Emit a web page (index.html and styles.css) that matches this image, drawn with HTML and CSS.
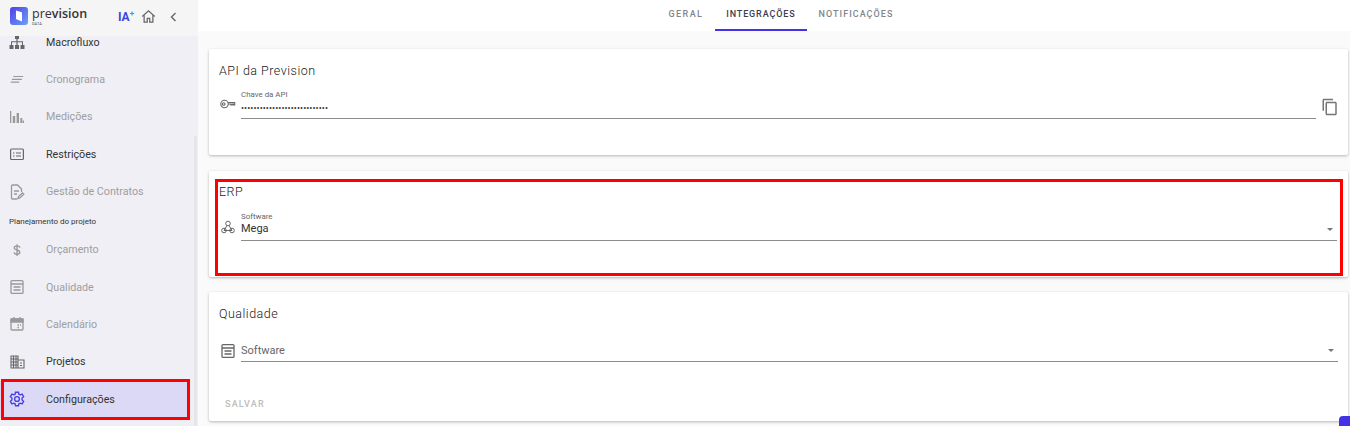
FILE: index.html
```html
<!DOCTYPE html>
<html>
<head>
    <meta charset="UTF-8">
    <title>Prevision - Configurações</title>
    <link rel="stylesheet" href="styles.css">
</head>
<body>
    <div class="sidebar">
        <div class="brand">
            <svg class="brand-logo" width="18" height="18" viewBox="0 0 18 18">
                <defs>
                    <linearGradient id="logo-grad" x1="0" y1="0" x2="1" y2="1">
                        <stop offset="0" stop-color="#4b3fe8"/>
                        <stop offset="1" stop-color="#6fa0f5"/>
                    </linearGradient>
                </defs>
                <path d="M3 0h12a3 3 0 0 1 3 3v12a3 3 0 0 1-3 3H3a3 3 0 0 1-3-3V3a3 3 0 0 1 3-3z" fill="url(#logo-grad)"/>
                <path d="M6 3.500l5 1.500a1 1 0 0 1 1 1v8.500l-5-2a1 1 0 0 1-1-1z" fill="#fff"/>
            </svg>
            <div class="brand-name">
                <span class="brand-word">pre<b>vision</b></span>
                <span class="brand-sub">DATA</span>
            </div>
            <span class="brand-ia">IA<sup>+</sup></span>
            <svg class="brand-btn" width="15" height="15" viewBox="0 0 24 24" fill="none" stroke="#666" stroke-width="2">
                <path d="M2 12l10-9 10 9"/><path d="M5 10v11h5v-6h4v6h5V10"/>
            </svg>
            <svg class="brand-back" width="12" height="12" viewBox="0 0 24 24" fill="none" stroke="#666" stroke-width="2.800">
                <path d="M15 4l-8 8 8 8"/>
            </svg>
        </div>
        <div class="menu">
            <a class="menu-item">
                <svg width="18" height="18" viewBox="0 0 18 18" fill="#666"><path d="M7 2h4v4H9.600v2.300H15V12h1.500v4h-4v-4H14V9.300H9.600V12H11v4H7v-4h1.400V9.300H4V12h1.500v4h-4v-4H3V8.300h5.400V6H7z"/></svg>
                <span>Macrofluxo</span>
            </a>
            <a class="menu-item off">
                <svg width="18" height="18" viewBox="0 0 18 18" fill="#999"><path d="M5.500 6h10l-.5 1.100H5zM4.200 8.800h10l-.5 1.100h-10zM3 11.600h8.500l-.5 1.100H2.500z"/></svg>
                <span>Cronograma</span>
            </a>
            <a class="menu-item off">
                <svg width="18" height="18" viewBox="0 0 18 18" fill="#999"><path d="M2 3h1.300v12H2zM4.800 8h2.400v7H4.800zM8.600 5H11v10H8.600zM12.300 10h2v5h-2zM14.800 12.500H16V15h-1.200z"/></svg>
                <span>Medições</span>
            </a>
            <a class="menu-item">
                <svg width="18" height="18" viewBox="0 0 18 18" fill="none" stroke="#666" stroke-width="1.200"><rect x="2.600" y="4" width="12.800" height="10.500" rx="1"/><path d="M5 8h1.500M8 8h5M5 11h1.500M8 11h5"/></svg>
                <span>Restrições</span>
            </a>
            <a class="menu-item off">
                <svg width="18" height="18" viewBox="0 0 18 18" fill="none" stroke="#999" stroke-width="1.300"><path d="M9 16H4.500a1 1 0 0 1-1-1V3a1 1 0 0 1 1-1h5l4 4v3"/><path d="M6 8h5M6 11h3M10 15.500l.5-2 4-3.500 1.300 1.300-4 3.700z"/></svg>
                <span>Gestão de Contratos</span>
            </a>
            <div class="menu-label">Planejamento do projeto</div>
            <a class="menu-item off">
                <svg width="18" height="18" viewBox="0 0 18 18" fill="none" stroke="#999" stroke-width="1.300"><path d="M11.800 6.800c0-1.200-1.200-2-2.800-2s-2.800.8-2.800 2S7.400 8.600 9 9s2.800 1 2.800 2.300-1.200 2-2.800 2-2.800-.8-2.800-2M9 3.300v11.600"/></svg>
                <span>Orçamento</span>
            </a>
            <a class="menu-item off">
                <svg width="18" height="18" viewBox="0 0 18 18" fill="none" stroke="#999" stroke-width="1.300"><rect x="3" y="2.600" width="12" height="12.800" rx="1"/><path d="M3 6h12M5.500 9h7M5.500 12h7"/></svg>
                <span>Qualidade</span>
            </a>
            <a class="menu-item off">
                <svg width="18" height="18" viewBox="0 0 18 18" fill="none" stroke="#999" stroke-width="1.300"><rect x="3" y="4" width="12" height="11" rx="1"/><path d="M3 4h12v3H3z" fill="#999"/><path d="M6 2v3M12 2v3M9.500 10h1.500M12 10h1M9.500 12.500h1.500"/></svg>
                <span>Calendário</span>
            </a>
            <a class="menu-item">
                <svg width="18" height="18" viewBox="0 0 18 18" fill="none" stroke="#666" stroke-width="1.100"><path d="M3 3h7v12H3zM10 7h6v8h-6zM3 6h7M3 9h7M3 12h7M5.500 3v12M8 3v12M12 10h2M12 12.500h2"/></svg>
                <span>Projetos</span>
            </a>
            <a class="menu-item active">
                <svg width="18" height="18" viewBox="0 0 24 24" fill="none" stroke="#4a3de8" stroke-width="1.800"><path d="M10 3h4l.5 2.600 1.800.9 2.500-1 2 3.400-2 1.700v2.800l2 1.700-2 3.400-2.500-1-1.800.9L14 21h-4l-.5-2.600-1.800-.9-2.500 1-2-3.400 2-1.700v-2.800l-2-1.700 2-3.400 2.500 1 1.800-.9z"/><circle cx="12" cy="12" r="3.200"/></svg>
                <span>Configurações</span>
            </a>
        </div>
        <div class="sidebar-scroll"></div>
    </div>

    <div class="content">
        <div class="tabs">
            <a class="tab tab-first">Geral</a>
            <a class="tab current">Integrações</a>
            <a class="tab">Notificações</a>
        </div>
        <div class="cards">
            <div class="card card-api">
                <h3>API da Prevision</h3>
                <div class="field-row">
                    <svg class="field-icon" width="18" height="18" viewBox="0 0 18 18" fill="none" stroke="#666" stroke-width="1.100"><circle cx="5.500" cy="9" r="3.700"/><circle cx="4.700" cy="9" r="1.300"/><path d="M9.200 7.500h6.500v2.400h-1.300V9h-1.200v.9h-1.400V9h-2.600"/></svg>
                    <div class="field">
                        <label>Chave da API</label>
                        <div class="value secret">••••••••••••••••••••••••••••</div>
                    </div>
                    <svg class="copy-icon" width="18" height="18" viewBox="0 0 24 24" fill="#757575"><path d="M16 1H4c-1.100 0-2 .9-2 2v14h2V3h12V1zm3 4H8c-1.100 0-2 .9-2 2v14c0 1.100.9 2 2 2h11c1.100 0 2-.9 2-2V7c0-1.100-.9-2-2-2zm0 16H8V7h11v14z"/></svg>
                </div>
            </div>
            <div class="card card-erp">
                <h3>ERP</h3>
                <div class="field-row">
                    <svg class="field-icon" width="18" height="18" viewBox="0 0 18 18" fill="none" stroke="#666" stroke-width="1"><circle cx="9" cy="5.500" r="2.300"/><circle cx="5" cy="12.500" r="2.300"/><circle cx="13" cy="12.500" r="2.300"/><path d="M7.900 7.500L5 12.500M10 7.500l3 5M5 12.500h8"/></svg>
                    <div class="field">
                        <label>Software</label>
                        <div class="value">Mega</div>
                        <span class="caret"></span>
                    </div>
                </div>
            </div>
            <div class="card card-quality">
                <h3>Qualidade</h3>
                <div class="field-row">
                    <svg class="field-icon" width="18" height="18" viewBox="0 0 18 18" fill="none" stroke="#666" stroke-width="1.300"><rect x="3" y="2.600" width="12" height="12.800" rx="1"/><path d="M3 6h12M5.500 9h7M5.500 12h7"/></svg>
                    <div class="field field-empty">
                        <div class="placeholder">Software</div>
                        <span class="caret"></span>
                    </div>
                </div>
                <a class="save-btn">Salvar</a>
            </div>
        </div>
    </div>

    <div class="mark mark-menu"></div>
    <div class="mark mark-erp"></div>
    <div class="chat-tab"></div>
</body>
</html>
```

FILE: styles.css
```css
html, body {
    margin: 0;
    padding: 0;
    width: 100%;
    height: 100%;
    overflow: hidden;
}
body {
    display: flex;
    background-color: #fafafa;
    color: #333;
    font-family: Roboto, "Liberation Sans", sans-serif;
}

/* sidebar */
.sidebar {
    position: relative;
    width: 198px;
    flex-shrink: 0;
    background-color: #f0eff6;
    overflow: hidden;
}
.brand {
    position: relative;
    z-index: 2;
    display: flex;
    align-items: center;
    height: 36px;
    padding: 0 0 3px 10px;
    box-sizing: border-box;
    background-color: #f5f5f5;
}
.brand-logo { margin-top: -1px; }
.brand-name {
    display: flex;
    flex-direction: column;
    margin-left: 4px;
    width: 83px;
}
.brand-word {
    font-family: "Open Sans", sans-serif;
    font-size: 12.500px;
    line-height: 14px;
    color: #333;
}
.brand-word b { font-weight: 600; }
.brand-sub {
    font-size: 4px;
    line-height: 5px;
    color: #555;
}
.brand-ia {
    width: 20px;
    margin-left: 3px;
    font-size: 12px;
    font-weight: 700;
    color: #3b49df;
}
.brand-ia sup {
    font-size: 8px;
    line-height: 0;
    color: #4a90d9;
}
.brand-btn { margin-left: 3px; }
.brand-back { margin-left: 12px; }

.menu {
    margin-top: -12.700px;
    width: 187px;
}
.menu-item {
    display: flex;
    align-items: center;
    height: 37.400px;
    padding-left: 8px;
    box-sizing: border-box;
    font-size: 10.700px;
    color: #333;
}
.menu-item svg { flex-shrink: 0; }
.menu-item span { margin-left: 20px; }
.menu-item.off { color: #9e9e9e; }
.menu-item.active { background-color: #dbd9f5; }
.menu-label {
    height: 17px;
    line-height: 17px;
    margin-top: 3.200px;
    padding-left: 9px;
    padding-bottom: 0.500px;
    font-size: 8px;
    color: #333;
}
.sidebar-scroll {
    position: absolute;
    left: 194px;
    top: 136px;
    bottom: 0;
    width: 3px;
    background-color: #e6e6e9;
}

/* tabs */
.content {
    flex-grow: 1;
    min-width: 0;
}
.tabs {
    display: flex;
    justify-content: center;
    height: 31px;
    background-color: #fff;
    padding-left: 14px;
    box-sizing: border-box;
}
.tab {
    padding: 0 11px;
    line-height: 28px;
    font-size: 9px;
    font-weight: 500;
    letter-spacing: 1.050px;
    text-transform: uppercase;
    color: #85858c;
}
.tab + .tab { margin-left: 1px; }
.tab-first { letter-spacing: 1.400px; }
.tab.current {
    color: #3c3a55;
    letter-spacing: 0.870px;
    border-bottom: 2px solid #4433e6;
    height: 29px;
}

/* cards */
.cards {
    display: flex;
    flex-direction: column;
    gap: 16px;
    padding: 18px 2px 0 11px;
}
.card {
    background-color: #fff;
    border-radius: 2px;
    box-shadow: 0 1px 3px rgba(0, 0, 0, 0.28);
    padding: 14px 10px 0;
    box-sizing: border-box;
}
.card-api, .card-erp { height: 106px; }
.card-quality { height: 129px; }
.card-erp { margin-bottom: -1px; padding-top: 13px; }
.card h3 {
    margin: 0;
    font-size: 12.500px;
    line-height: 15px;
    font-weight: 300;
    letter-spacing: 0.500px;
    color: #222;
}
.field-row {
    display: flex;
    align-items: flex-start;
}
.field-icon { flex-shrink: 0; margin-top: 10px; }
.field {
    position: relative;
    flex-grow: 1;
    margin-left: 4px;
    height: 34px;
    border-bottom: 1px solid #8c8c8c;
    box-sizing: border-box;
}
.field label {
    display: block;
    padding-top: 5px;
    font-size: 7.900px;
    line-height: 9px;
    color: #666;
}
.value {
    font-size: 11px;
    line-height: 14px;
    color: #333;
}
.value.secret {
    padding-top: 2px;
    font-size: 9px;
    letter-spacing: 0.070px;
}
.copy-icon {
    flex-shrink: 0;
    margin: 13px -1px 0 5px;
}
.caret {
    position: absolute;
    right: 4px;
    top: 19px;
    border-left: 3.500px solid transparent;
    border-right: 3.500px solid transparent;
    border-top: 3.500px solid #757575;
}
.card-api .field-row { margin-top: 7px; }
.card-erp .field-row { margin-top: 10px; }
.card-erp label { padding-top: 3px; }
.card-erp .value { padding-top: 1px; }
.card-erp .field { height: 32px; margin-right: 1px; }
.card-erp .field-icon { margin-top: 9px; }
.card-quality .field-row { margin-top: 9px; }
.card-quality .field-icon { margin-top: 12px; }
.field-empty { height: 32px; }
.placeholder {
    padding-top: 14px;
    font-size: 11px;
    line-height: 14px;
    color: #666;
}
.field-empty .caret { top: 19px; }
.save-btn {
    display: block;
    margin-top: 37px;
    padding-left: 6px;
    font-size: 9px;
    font-weight: 500;
    letter-spacing: 1.200px;
    text-transform: uppercase;
    color: #bdbdbd;
}

/* annotations and floating widget */
.mark {
    position: absolute;
    border: 3px solid #f00;
    box-sizing: border-box;
    z-index: 5;
}
.mark-menu {
    left: 1px;
    top: 379px;
    width: 189px;
    height: 41px;
}
.mark-erp {
    left: 215px;
    top: 179px;
    width: 1128px;
    height: 97px;
}
.chat-tab {
    position: absolute;
    left: 1339px;
    top: 416px;
    width: 14px;
    height: 14px;
    border-radius: 4px 0 0 0;
    background-color: #4433e6;
}
```
